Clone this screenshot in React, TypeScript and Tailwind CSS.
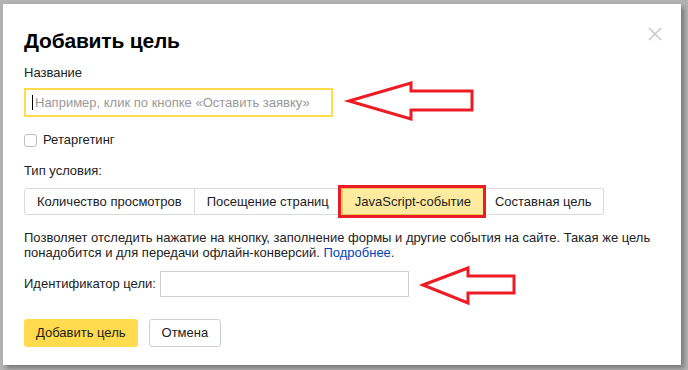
const tabs = ['Количество просмотров', 'Посещение страниц', 'JavaScript-событие', 'Составная цель']

export default function App() {
  return (
    <div className="relative w-[688px] h-[370px] overflow-hidden bg-[#b3b3b3] pl-[3px] pt-[4px] font-['Liberation_Sans',Arial,sans-serif] text-[13px] text-[#222]">
      <div className="relative w-[678px] h-[361px] bg-white px-[21px] pt-[25px] shadow-[3px_3px_5px_rgba(0,0,0,0.35)]">
        <button className="absolute right-[19px] top-[23px] w-[14px] h-[14px]">
          <svg viewBox="0 0 14 14" className="w-[14px] h-[14px]" stroke="#c8c8c8" strokeWidth="1.6">
            <path d="M1 1 13 13M13 1 1 13" />
          </svg>
        </button>

        <h1 className="text-[21px] leading-[24px] font-bold text-black tracking-[-0.2px]">Добавить цель</h1>

        <div className="mt-[12px] leading-[16px]">Название</div>
        <div className="mt-[7px] w-[309px] h-[29px] border-2 border-[#ffdb4d] flex items-center pl-[6px]">
          <span className="w-px h-[15px] bg-black mr-[2px]" />
          <span className="text-[#999]">Например, клик по кнопке «Оставить заявку»</span>
        </div>

        <label className="mt-[15px] flex items-center gap-[6px] leading-[16px]">
          <span className="w-[13px] h-[13px] rounded-[3px] border border-[#bdbdbd] bg-white" />
          Ретаргетинг
        </label>

        <div className="mt-[15px] leading-[16px]">Тип условия:</div>

        <div className="mt-[9px] flex h-[27px]">
          {tabs.map((t, i) => {
            const active = i === 2
            return (
              <div
                key={t}
                className={
                  active
                    ? 'relative flex items-center px-[12px] bg-[#ffeba0] border border-[#e3c65a]'
                    : i === 0
                      ? 'flex items-center px-[12px] border border-[#d9d9d9] rounded-l-[3px]'
                      : i === 3
                        ? 'flex items-center px-[11px] border border-[#d9d9d9] border-l-0 rounded-r-[3px]'
                        : 'flex items-center px-[12px] border border-[#d9d9d9] border-l-0'
                }
              >
                {t}
                {active && <span className="absolute -left-[5px] -right-[3px] -top-[4px] -bottom-[4px] border-[3px] border-[#ed1c24]" />}
              </div>
            )
          })}
        </div>

        <div className="mt-[15px] leading-[15px] w-[630px]">
          <div>Позволяет отследить нажатие на кнопку, заполнение формы и другие события на сайте. Такая же цель</div>
          <div className="flex">
            <span>понадобится и для передачи офлайн-конверсий.&nbsp;</span>
            <span className="text-[#0044bb]">Подробнее</span>
            <span>.</span>
          </div>
        </div>

        <div className="mt-[11px] flex items-center gap-[4px]">
          <span>Идентификатор цели:</span>
          <div className="w-[249px] h-[26px] border border-[#cfcfcf]" />
        </div>

        <div className="mt-[22px] flex gap-[11px]">
          <button className="h-[28px] px-[12px] rounded-[3px] bg-[#ffdb4d] text-[#222]">Добавить цель</button>
          <button className="h-[28px] px-[12px] rounded-[3px] border border-[#cfcfcf] bg-white text-[#222]">Отмена</button>
        </div>
      </div>

      <svg className="absolute left-0 top-0 w-[688px] h-[370px] pointer-events-none" viewBox="0 0 688 370" fill="none" stroke="#ed1c24" strokeWidth="3">
        <polygon points="349,101 411,83 411,91 472,91 472,110 411,110 411,119" />
        <polygon points="423,285 468,268 468,276 514,276 514,293 468,293 468,303" />
      </svg>
    </div>
  )
}
